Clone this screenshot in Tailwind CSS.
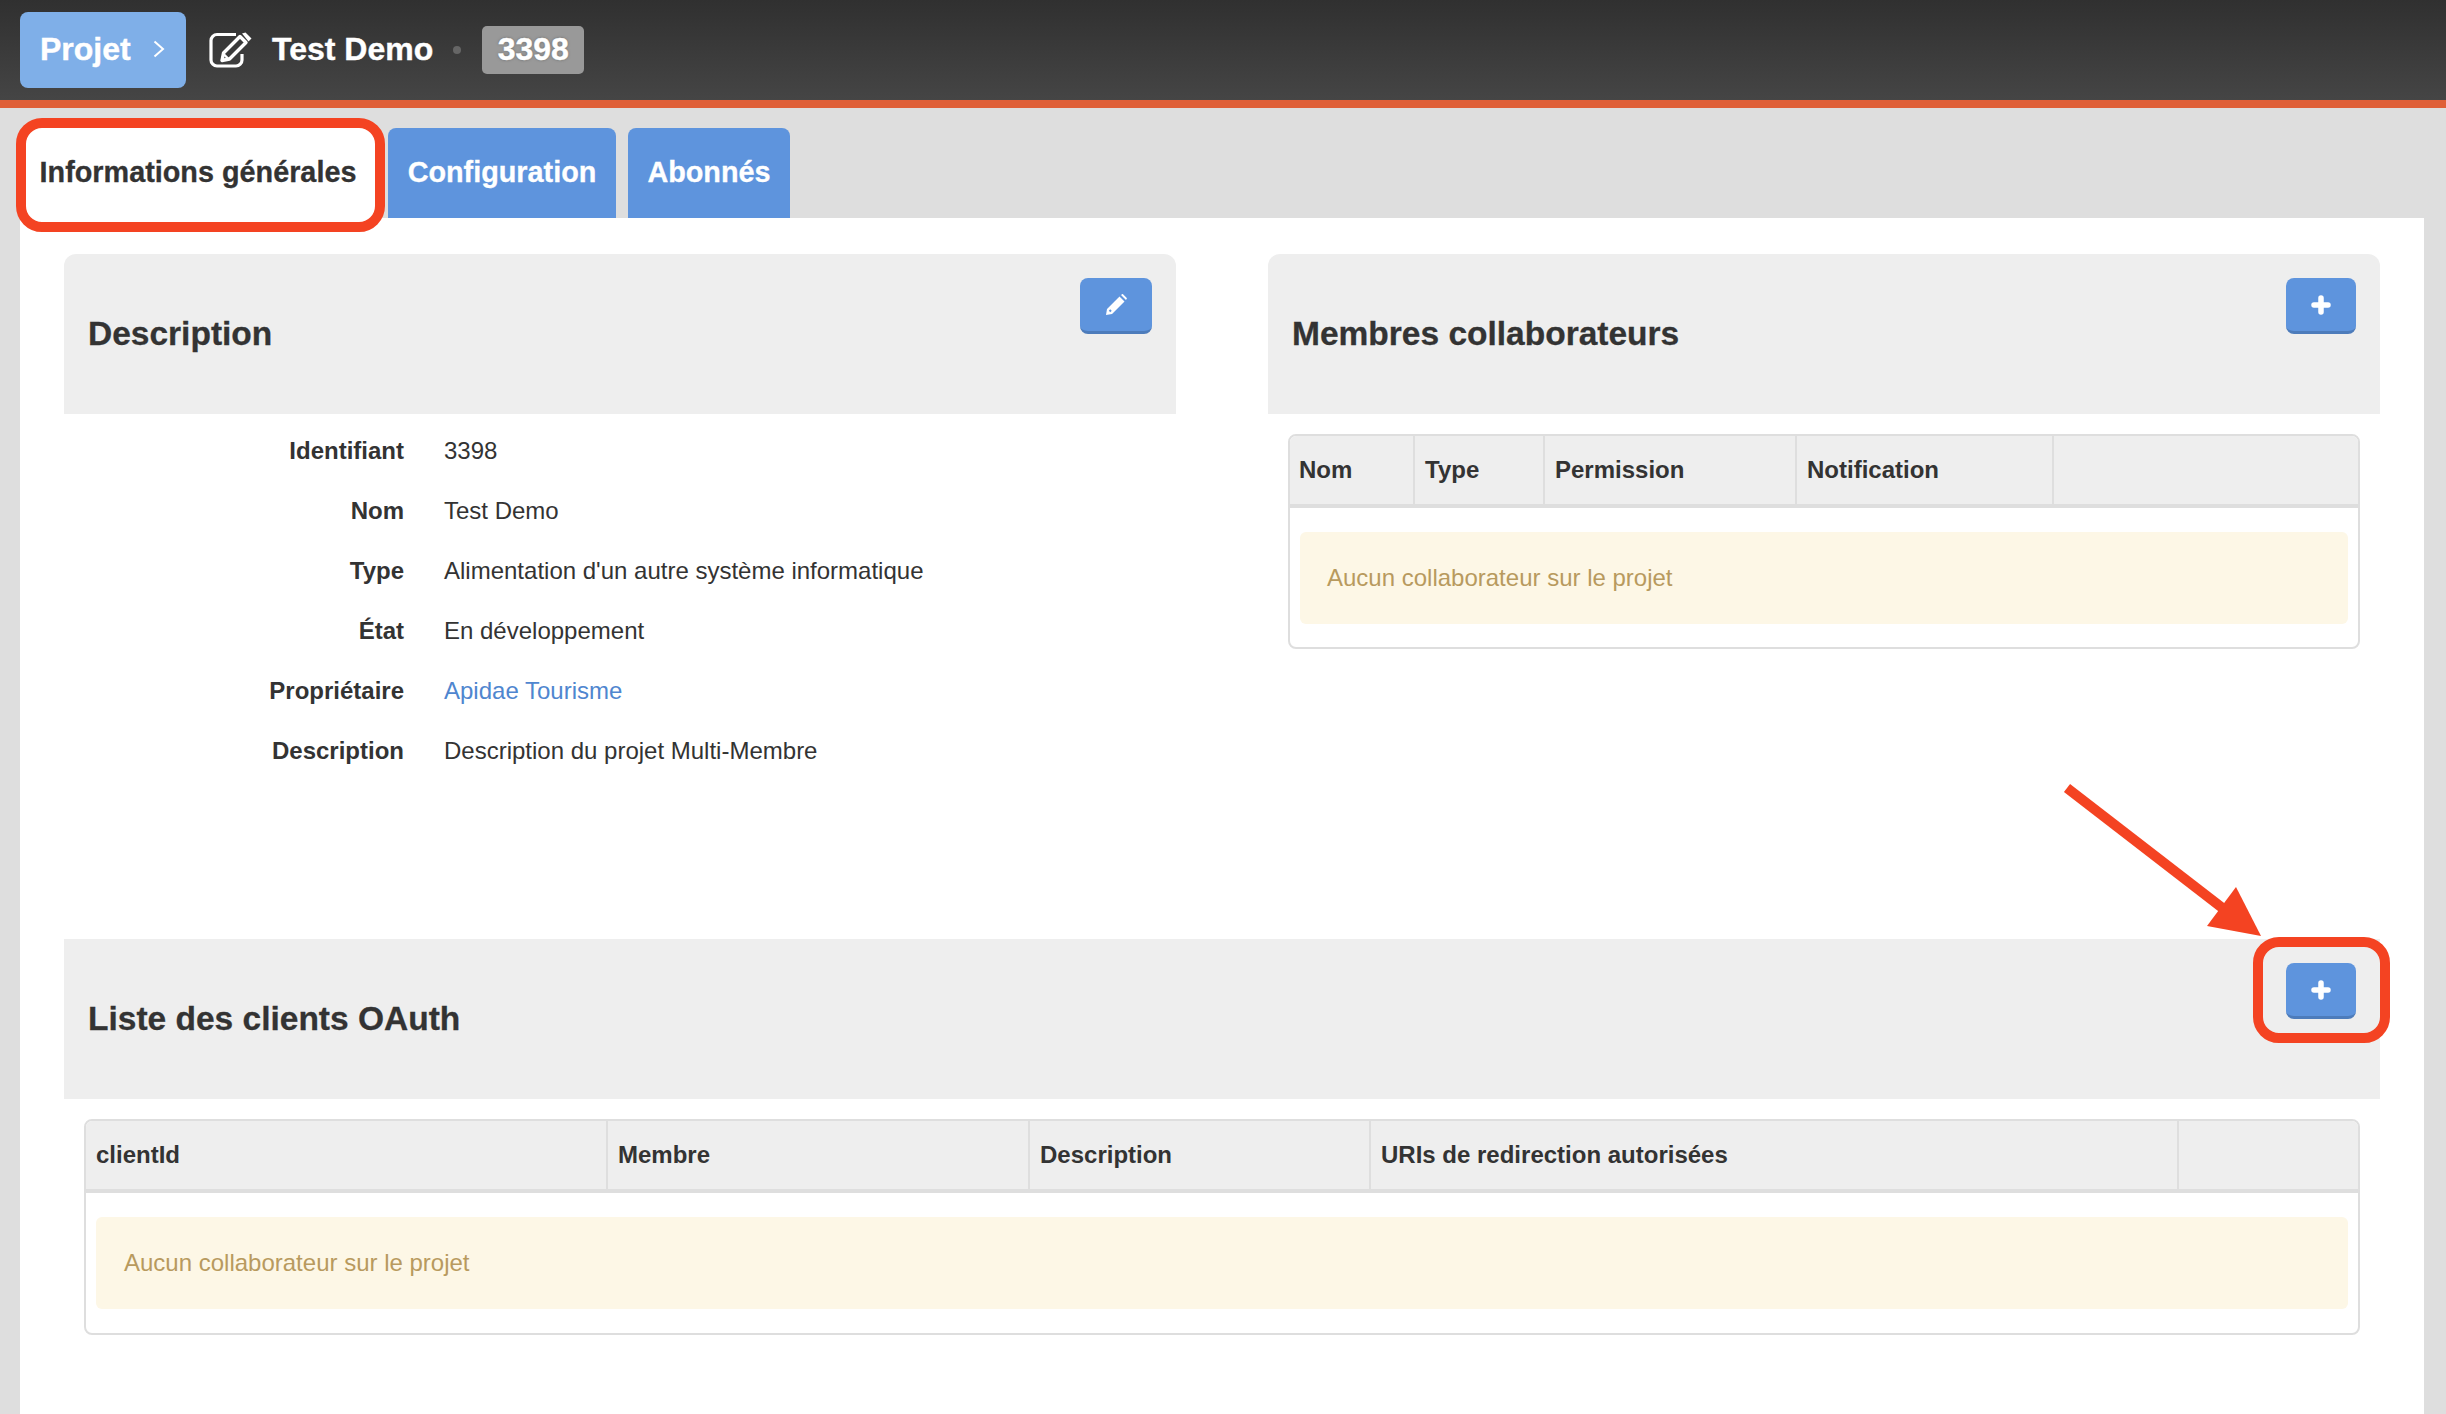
<!DOCTYPE html>
<html lang="fr">
<head>
<meta charset="utf-8">
<title>Projet Test Demo</title>
<script src="https://cdn.jsdelivr.net/npm/@tailwindcss/browser@4"></script>
</head>
<body class="m-0">
<div class="relative w-[2446px] h-[1414px] overflow-hidden flex flex-col bg-[#dedede] text-[#333333] font-['Liberation_Sans',Arial,sans-serif] text-[24px]">

  <header class="box-content h-[100px] shrink-0 border-b-8 border-[#df5f37] bg-gradient-to-b from-[#303030] to-[#454545] flex items-center pl-[20px] text-white font-bold text-[32px] [-webkit-text-stroke:0.4px_#ffffff]">
    <div class="w-[166px] h-[76px] pb-[2px] rounded-[8px] bg-[#7fafe8] flex items-center pl-[20px] gap-[22px]">
      <span>Projet</span>
      <svg class="w-[12px] h-[18px]" viewBox="0 0 12 18" fill="none" stroke="#ffffff" stroke-width="2"><path d="M1.5 1.5 L10 9 L1.5 16.5"/></svg>
    </div>
    <svg class="ml-[23px] w-[44px] h-[36px]" viewBox="0 0 44 36" fill="none">
      <path d="M27 2.5 H8 A6 6 0 0 0 2 8.5 V28 A6 6 0 0 0 8 34 H27 A6 6 0 0 0 33 28 V22" stroke="#ffffff" stroke-width="3.2"/>
      <path d="M13 28.5 L14.5 21 L31 4.5 L37 10.5 L20.5 27 Z" stroke="#ffffff" stroke-width="3.4" stroke-linejoin="round"/>
      <path d="M33 1.5 L36.5 0.5 L42.5 6.5 L39.5 9.5 Z" fill="#ffffff"/>
      <path d="M14.5 22 L20 27.5" stroke="#ffffff" stroke-width="2.4"/>
    </svg>
    <span class="ml-[19px] pb-[2px]">Test Demo</span>
    <span class="ml-[20px] w-[8px] h-[8px] rounded-full bg-[#666666]"></span>
    <span class="ml-[21px] w-[102px] h-[48px] pb-[2px] rounded-[5px] bg-[#999999] flex items-center justify-center [text-shadow:0_0_3px_#666666]">3398</span>
  </header>

  <nav class="flex gap-[12px] pl-[20px] pt-[20px] h-[110px] shrink-0 font-bold text-[28.8px] [-webkit-text-stroke:0.3px]">
    <a class="w-[356px] h-[90px] pb-[1px] rounded-t-[8px] bg-white text-[#333333] flex items-center justify-center whitespace-nowrap">Informations générales</a>
    <a class="w-[228px] h-[90px] pb-[1px] rounded-t-[8px] bg-[#5e94dd] text-white flex items-center justify-center">Configuration</a>
    <a class="w-[162px] h-[90px] pb-[1px] rounded-t-[8px] bg-[#5e94dd] text-white flex items-center justify-center">Abonnés</a>
  </nav>

  <main class="flex-1 ml-[20px] mr-[22px] bg-white pt-[36px] px-[44px]">
    <div class="grid grid-cols-[1112px_1112px] gap-x-[92px] h-[685px]">
      <section>
        <div class="h-[160px] rounded-t-[12px] bg-[#eeeeee] flex justify-between items-start pl-[24px] pr-[24px]">
          <h2 class="self-center pt-[1px] font-bold text-[33.5px] [-webkit-text-stroke:0.3px]">Description</h2>
          <button class="mt-[24px] w-[72px] h-[56px] rounded-[8px] bg-[#5e94dd] border-b-[3px] border-[#4d7cbb] flex items-center justify-center">
            <svg class="w-[22px] h-[22px]" viewBox="0 0 22 22" fill="#ffffff"><path d="M14.5 2.5 L19.5 7.5 L7 20 L1 21 L2 15 Z M16 1 L17.6 -0.2 L22 4.2 L21 6 Z"/><path d="M4.5 16 L6 17.5" stroke="#5e94dd" stroke-width="2"/></svg>
          </button>
        </div>
        <dl class="mt-[7px] grid grid-cols-[340px_1fr] gap-x-[40px] auto-rows-[60px] items-center">
          <dt class="font-bold text-right">Identifiant</dt><dd>3398</dd>
          <dt class="font-bold text-right">Nom</dt><dd>Test Demo</dd>
          <dt class="font-bold text-right">Type</dt><dd>Alimentation d'un autre système informatique</dd>
          <dt class="font-bold text-right">État</dt><dd>En développement</dd>
          <dt class="font-bold text-right">Propriétaire</dt><dd class="text-[#4f86cf]">Apidae Tourisme</dd>
          <dt class="font-bold text-right">Description</dt><dd>Description du projet Multi-Membre</dd>
        </dl>
      </section>

      <section>
        <div class="h-[160px] rounded-t-[12px] bg-[#eeeeee] flex justify-between items-start pl-[24px] pr-[24px]">
          <h2 class="self-center pt-[1px] font-bold text-[33.5px] [-webkit-text-stroke:0.3px]">Membres collaborateurs</h2>
          <button class="mt-[24px] w-[70px] h-[56px] rounded-[8px] bg-[#5e94dd] border-b-[3px] border-[#4d7cbb] flex items-center justify-center">
            <svg class="w-[20px] h-[20px]" viewBox="0 0 20 20" fill="none" stroke="#ffffff" stroke-width="5.5" stroke-linecap="round"><path d="M10 3 V17 M3 10 H17"/></svg>
          </button>
        </div>
        <div class="mt-[20px] ml-[20px] mr-[20px] h-[215px] border-2 border-[#dedede] rounded-[8px] overflow-hidden">
          <div class="h-[72px] flex bg-[#eeeeee] border-b-4 border-[#dedede] font-bold text-[24px]">
            <div class="w-[125px] pl-[9px] flex items-center border-r-2 border-[#dedede]">Nom</div>
            <div class="w-[130px] pl-[10px] flex items-center border-r-2 border-[#dedede]">Type</div>
            <div class="w-[252px] pl-[10px] flex items-center border-r-2 border-[#dedede]">Permission</div>
            <div class="w-[257px] pl-[10px] flex items-center border-r-2 border-[#dedede]">Notification</div>
          </div>
          <div class="mt-[24px] mx-[10px] h-[92px] pb-[1px] rounded-[6px] bg-[#fdf7e6] text-[#b89a5e] pl-[27px] flex items-center">Aucun collaborateur sur le projet</div>
        </div>
      </section>
    </div>

    <section>
      <div class="h-[160px] bg-[#eeeeee] flex justify-between items-start pl-[24px] pr-[24px]">
        <h2 class="self-center pt-[1px] font-bold text-[33.5px] [-webkit-text-stroke:0.3px]">Liste des clients OAuth</h2>
        <button class="mt-[24px] w-[70px] h-[56px] rounded-[8px] bg-[#5e94dd] border-b-[3px] border-[#4d7cbb] flex items-center justify-center">
          <svg class="w-[20px] h-[20px]" viewBox="0 0 20 20" fill="none" stroke="#ffffff" stroke-width="5.5" stroke-linecap="round"><path d="M10 3 V17 M3 10 H17"/></svg>
        </button>
      </div>
      <div class="mt-[20px] ml-[20px] mr-[20px] h-[216px] border-2 border-[#dedede] rounded-[8px] overflow-hidden">
        <div class="h-[72px] flex bg-[#eeeeee] border-b-4 border-[#dedede] font-bold text-[24px]">
          <div class="w-[522px] pl-[10px] flex items-center border-r-2 border-[#dedede]">clientId</div>
          <div class="w-[422px] pl-[10px] flex items-center border-r-2 border-[#dedede]">Membre</div>
          <div class="w-[341px] pl-[10px] flex items-center border-r-2 border-[#dedede]">Description</div>
          <div class="w-[808px] pl-[10px] flex items-center border-r-2 border-[#dedede]">URIs de redirection autorisées</div>
        </div>
        <div class="mt-[24px] mx-[10px] h-[92px] pb-[1px] rounded-[6px] bg-[#fdf7e6] text-[#b89a5e] pl-[28px] flex items-center">Aucun collaborateur sur le projet</div>
      </div>
    </section>
  </main>

  <div class="absolute left-[16px] top-[118px] w-[369px] h-[114px] border-[10px] border-[#f44322] rounded-[26px]"></div>
  <div class="absolute left-[2253px] top-[937px] w-[137px] h-[106px] border-[10px] border-[#f44322] rounded-[26px]"></div>
  <svg class="absolute left-0 top-0 w-[2446px] h-[1414px] pointer-events-none" viewBox="0 0 2446 1414" fill="#f44322">
    <path d="M2067 788 L2225 910" stroke="#f44322" stroke-width="10" fill="none"/>
    <path d="M2236 887 L2261 936 L2207 926 Z"/>
  </svg>
</div>
</body>
</html>
